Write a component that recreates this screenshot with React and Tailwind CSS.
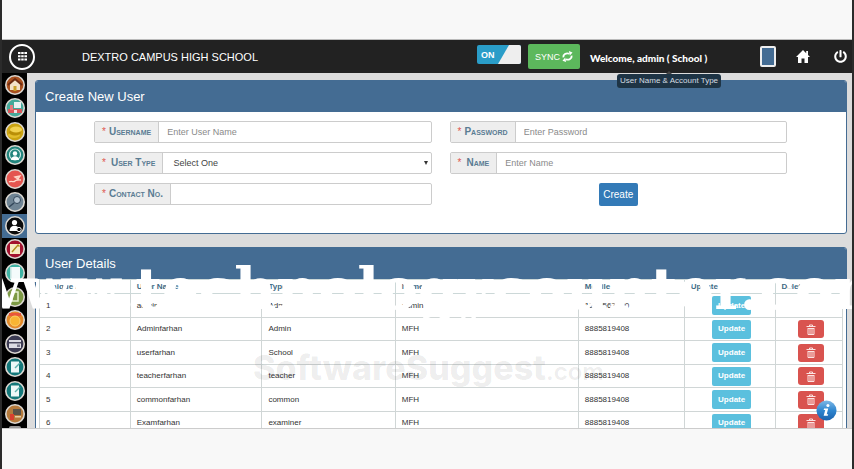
import React from 'react';
import clsx from 'clsx';
import { FaPowerOff } from 'react-icons/fa';

const menu = [
  {
    name: 'Dashboard',
    color: '#a8501f',
    art: (
      <>
        <path d="M4 11L11 5l7 6h-2v5H6v-5z" fill="#f3e3c8" />
        <path d="M4 11L11 5l7 6" stroke="#6b2a10" strokeWidth="2" fill="none" />
        <path d="M9.500 12h3v5h-3z" fill="#c9a02a" />
      </>
    ),
  },
  {
    name: 'Classes',
    color: '#45a99a',
    art: (
      <>
        <path d="M10 5h7v6h-7z" fill="#e9f1f2" />
        <path d="M4 12h14v4H4z" fill="#d9575b" />
        <path d="M6 8h3v5H6z" fill="#e57b7e" />
        <path d="M10 13h3v3h-3z" fill="#f5dfe0" />
      </>
    ),
  },
  {
    name: 'Fees',
    color: '#caa312',
    art: (
      <>
        <ellipse cx="10" cy="14" rx="6" ry="3" fill="#e3bd2b" />
        <ellipse cx="11" cy="11.500" rx="6" ry="3" fill="#b98e07" />
        <ellipse cx="12" cy="8.500" rx="6" ry="3" fill="#f2d251" />
      </>
    ),
  },
  {
    name: 'Staff',
    color: '#23857d',
    art: (
      <>
        <circle cx="11" cy="10.500" r="5.500" fill="none" stroke="#cfe9e5" strokeWidth="1.200" />
        <circle cx="11" cy="9.500" r="2.200" fill="#fff" />
        <path d="M7 16c0-5 8-5 8 0z" fill="#fff" />
      </>
    ),
  },
  {
    name: 'Events',
    color: '#e4554f',
    art: (
      <path d="M5 14c3-2 4 1 6-1s4-1 6-1M11 9l5-1-2 3z" stroke="#ffd7c9" strokeWidth="1.300" fill="#f6b8a4" />
    ),
  },
  {
    name: 'Search',
    color: '#6f8494',
    art: (
      <>
        <circle cx="13" cy="9" r="3.500" fill="#b3c3d0" stroke="#33475a" strokeWidth="1" />
        <path d="M10 12l-5 4" stroke="#33475a" strokeWidth="1.600" />
      </>
    ),
  },
  {
    name: 'Users',
    color: '#0b0b0b',
    active: true,
    art: (
      <>
        <circle cx="10.500" cy="7.500" r="2.600" fill="#fff" />
        <path d="M5.500 16c0-7 10-7 10 0z" fill="#fff" />
        <circle cx="15" cy="14.500" r="2.200" fill="#0b0b0b" stroke="#fff" strokeWidth="1" />
      </>
    ),
  },
  {
    name: 'Notes',
    color: '#a3122f',
    art: (
      <>
        <path d="M6 6h10v10H6z" fill="#f6ecc4" />
        <path d="M8 14l6-7 1.500 1.500" stroke="#b08a1c" strokeWidth="1.400" fill="none" />
      </>
    ),
  },
  {
    name: 'Register',
    color: '#3fb3a4',
    art: (
      <>
        <path d="M7 5h9v12H7z" fill="#f4fbfb" />
        <path d="M6 5h1.500v12H6z" fill="#c3e4e0" />
      </>
    ),
  },
  {
    name: 'Schedule',
    color: '#7d9a45',
    art: <path d="M8 6h6v9H8z" fill="none" stroke="#e5efcf" strokeWidth="1.500" />,
  },
  {
    name: 'Awards',
    color: '#e3892a',
    art: (
      <>
        <path d="M5 4h12v3H5z" fill="#e8563a" />
        <circle cx="11" cy="12" r="5" fill="#f8b433" stroke="#fbd06c" strokeWidth="1" />
      </>
    ),
  },
  {
    name: 'Cards',
    color: '#3b3a52',
    art: (
      <>
        <path d="M5 7h12v8H5z" fill="#dcdce4" />
        <path d="M5 9h12v1.500H5z" fill="#4b4a60" />
        <path d="M13 11.500h3v2.500h-3z" fill="#77768a" />
      </>
    ),
  },
  {
    name: 'Exams',
    color: '#14787a',
    art: (
      <>
        <path d="M7 5.500h8v11H7z" fill="#eef8f8" />
        <path d="M11 12l5-5" stroke="#5fb0ad" strokeWidth="1.500" />
      </>
    ),
  },
  {
    name: 'Results',
    color: '#14787a',
    art: (
      <>
        <path d="M7 5.500h8v11H7z" fill="#eef8f8" />
        <path d="M11 12l5-5" stroke="#5fb0ad" strokeWidth="1.500" />
      </>
    ),
  },
  {
    name: 'Library',
    color: '#b57a3c',
    art: (
      <>
        <path d="M9 6h8v6H9z" fill="#5b5348" />
        <path d="M6 11h4v6H6z" fill="#d8402f" />
        <path d="M11 13h6v1.500h-6z" fill="#e8cfa2" />
      </>
    ),
  },
];

const users = [
  { id: 1, user: 'admin', type: 'Admin', name: 'admin', mobile: '1234567890', locked: true },
  { id: 2, user: 'Adminfarhan', type: 'Admin', name: 'MFH', mobile: '8885819408' },
  { id: 3, user: 'userfarhan', type: 'School', name: 'MFH', mobile: '8885819408' },
  { id: 4, user: 'teacherfarhan', type: 'teacher', name: 'MFH', mobile: '8885819408' },
  { id: 5, user: 'commonfarhan', type: 'common', name: 'MFH', mobile: '8885819408' },
  { id: 6, user: 'Examfarhan', type: 'examiner', name: 'MFH', mobile: '8885819408' },
];

const HomeIcon = () => (
  <svg viewBox="0 0 14 13" className="w-[14px] h-[13px]" fill="#fff">
    <path d="M7 0L0 7h2v6h3.500V8.500h3V13H12V7h2l-2-2V1h-1.800v2.200z" />
  </svg>
);

const TrashIcon = () => (
  <svg viewBox="0 0 10 11" className="w-[10px] h-[11px]" fill="none" stroke="#fbe3e2">
    <path d="M0.500 2.500h9M3.500 2V1h3v1" />
    <path d="M2 4v6.500h6V4M4 4v6M6 4v6" />
    <path d="M2 4.500h6" />
  </svg>
);

const SyncIcon = () => (
  <svg viewBox="0 0 12 12" className="w-[11px] h-[11px] -mt-px" fill="none" stroke="#fff" strokeWidth="2">
    <path d="M1.500 7C1 4 4.500 1.500 8 3M10.500 5C11 8 7.500 10.500 4 9" />
    <path d="M7.500 0l4 1.500-3 3.500zM4.500 12L.5 10.500l3-3.500z" fill="#fff" stroke="none" />
  </svg>
);

const Field = ({ id, label, wide, children }) => (
  <div className="flex h-[22px] rounded-[2px] border border-[#ccc] bg-white">
    <label
      htmlFor={id}
      className="flex items-center gap-[3px] px-[7px] bg-[#eee] border-r border-[#ccc] text-[10px] leading-3 font-bold text-[#5a7c93] [font-variant:small-caps] whitespace-nowrap"
    >
      <span className={clsx('text-[#e0584f] font-normal', wide && 'mr-[2px]')}>*</span>
      {label}
    </label>
    {children}
  </div>
);

const inputClass =
  'flex-1 min-w-0 px-2 text-[9px] leading-3 text-[#555] placeholder:text-[#8a8a8a] outline-none';

const PanelHeading = ({ children }) => (
  <h2 className="h-[31px] px-[9px] flex items-center bg-[#446c93] text-white text-[13px] leading-4 shrink-0">
    {children}
  </h2>
);

const Header = () => (
  <header className="h-[33px] shrink-0 bg-[#222] text-white flex items-center pl-[7px] pr-[5px]">
    <button aria-label="Menu" className="w-[26px] h-[26px] rounded-full border-2 border-white flex items-center justify-center">
      <svg viewBox="0 0 9 9" className="w-[9px] h-[9px]" fill="#fff">
        <path d="M0 0h2.500v2H0zM3.200 0h2.500v2H3.200zM6.400 0H9v2H6.400zM0 3.300h2.500v2H0zM3.200 3.300h2.500v2H3.200zM6.400 3.300H9v2H6.400zM0 6.600h2.500v2H0zM3.200 6.600h2.500v2H3.200zM6.400 6.600H9v2H6.400z" />
      </svg>
    </button>
    <h1 className="ml-[47px] text-[11px] leading-4 flex-1 whitespace-nowrap">DEXTRO CAMPUS HIGH SCHOOL</h1>
    <button className="relative -mt-1 w-11 h-[19px] rounded-[2px] overflow-hidden bg-[#2a9dc8] text-[9px] leading-3 font-bold text-left pl-1">
      ON
      <svg viewBox="0 0 24 19" className="absolute right-0 top-0 h-full w-6">
        <path d="M12 0h12v19H1z" fill="#eee" />
      </svg>
    </button>
    <button className="ml-[7px] w-[52px] h-[25px] rounded-[2px] bg-[#5cb85c] text-[9px] leading-3 flex items-center justify-center gap-[2px]">
      SYNC
      <SyncIcon />
    </button>
    <div className="relative ml-[10px] w-[122px]">
      <span className="font-['Lato',sans-serif] font-black text-[10px] leading-4 whitespace-nowrap">
        Welcome, admin ( School )
      </span>
      <div
        role="tooltip"
        className="absolute z-20 top-[29px] left-[27px] w-[104px] h-[14px] rounded-[3px] bg-[#1e3445] text-[#d5dde3] text-[8px] leading-[14px] text-center whitespace-nowrap"
      >
        <span className="absolute -top-[3px] left-1/2 -ml-[3px] border-x-[3px] border-b-[3px] border-x-transparent border-b-[#444]" />
        User Name &amp; Account Type
      </div>
    </div>
    <button aria-label="Theme colour" className="ml-[48px] w-4 h-[21px] rounded-[2px] border-2 border-[#eee] bg-[#446c93]" />
    <a href="#home" aria-label="Home" className="ml-5">
      <HomeIcon />
    </a>
    <button aria-label="Log out" className="ml-6">
      <FaPowerOff size={13} />
    </button>
  </header>
);

const Sidebar = () => (
  <nav className="w-[25px] shrink-0 bg-black flex flex-col">
    {menu.map((item) => (
      <a
        key={item.name}
        href="#menu"
        aria-label={item.name}
        className={clsx('flex-1 min-h-0 flex items-center justify-center', item.active && 'bg-[#446c93]')}
      >
        <svg viewBox="0 0 22 22" className="w-[22px] h-[22px] shrink-0">
          <circle cx="11" cy="11" r="9.200" fill={item.color} stroke="#dcd8d2" strokeWidth="1.600" />
          {item.art}
        </svg>
      </a>
    ))}
    <span className="h-[2px] w-3 mx-auto bg-[#999] rounded-t-full" />
  </nav>
);

const CreateUser = () => (
  <section className="shrink-0 rounded-[3px] border border-[#446c93] overflow-hidden bg-white">
    <PanelHeading>Create New User</PanelHeading>
    <form className="grid grid-cols-2 gap-x-[18px] gap-y-[9px] pt-[9px] pb-[27px] pl-[58px] pr-[59px]">
      <Field id="username" label="Username">
        <input id="username" placeholder="Enter User Name" className={inputClass} />
      </Field>
      <Field id="password" label="Password">
        <input id="password" type="password" placeholder="Enter Password" className={inputClass} />
      </Field>
      <Field id="type" label="User Type" wide>
        <div className="relative flex-1 flex">
          <select id="type" className="flex-1 appearance-none px-[10px] text-[9px] leading-3 text-[#444] outline-none">
            <option>Select One</option>
          </select>
          <span className="absolute right-[3px] top-[8px] border-x-[2px] border-t-[4px] border-x-transparent border-t-[#333] pointer-events-none" />
        </div>
      </Field>
      <Field id="name" label="Name" wide>
        <input id="name" placeholder="Enter Name" className={inputClass} />
      </Field>
      <Field id="contact" label="Contact No.">
        <input id="contact" className={inputClass} />
      </Field>
      <button
        type="button"
        className="justify-self-center w-[39px] h-[23px] rounded-[2px] bg-[#337ab7] text-white text-[10px] leading-3"
      >
        Create
      </button>
    </form>
  </section>
);

const cellClass = 'border border-[#d0d6d6] px-[6px]';

const UserDetails = () => (
  <section className="shrink-0 rounded-t-[3px] overflow-hidden border border-[#446c93] bg-white">
    <PanelHeading>User Details</PanelHeading>
    <div className="px-[3px]">
      <table className="w-full table-fixed border-collapse text-left text-[8px] leading-[10px] text-[#333]">
        <colgroup>
          <col className="w-[11.3%]" />
          <col className="w-[16.4%]" />
          <col className="w-[16.6%]" />
          <col className="w-[22.8%]" />
          <col className="w-[13.2%]" />
          <col className="w-[11.3%]" />
          <col className="w-[8.4%]" />
        </colgroup>
        <thead>
          <tr className="h-[14px] text-[#3f6b85]">
            {['Unique ID', 'User Name', 'Type', 'Name', 'Mobile', 'Update', 'Delete'].map((title) => (
              <th key={title} className="border border-[#ccd8d8] px-[6px] font-bold">
                {title}
              </th>
            ))}
          </tr>
        </thead>
        <tbody>
          {users.map((u) => (
            <tr key={u.id} className="odd:h-6 even:h-[23px]">
              <td className={cellClass}>{u.id}</td>
              <td className={cellClass}>{u.user}</td>
              <td className={cellClass}>{u.type}</td>
              <td className={cellClass}>{u.name}</td>
              <td className={cellClass}>{u.mobile}</td>
              <td className="border border-[#d0d6d6] pl-1">
                <button className="mx-auto w-[39px] h-[19px] rounded-[2px] bg-[#5bc0de] text-white font-bold flex items-center justify-center">
                  Update
                </button>
              </td>
              <td className="border border-[#d0d6d6] pl-1">
                {!u.locked && (
                  <button
                    aria-label={`Delete ${u.user}`}
                    className="mx-auto w-[26px] h-[18px] rounded-[3px] bg-[#d9534f] flex items-center justify-center"
                  >
                    <TrashIcon />
                  </button>
                )}
              </td>
            </tr>
          ))}
        </tbody>
      </table>
    </div>
  </section>
);

const App = () => (
  <div className="relative h-screen overflow-hidden flex flex-col bg-[#f8f8f8] border-x-2 border-[#2b2b2b] font-['Liberation_Sans',Arial,sans-serif]">
    <div className="h-10 shrink-0 border-b border-[#bbb]" />
    <Header />
    <div className="relative flex-1 min-h-0 flex overflow-hidden bg-[#dcdcdc]">
      <Sidebar />
      <main className="flex-1 min-w-0 flex flex-col gap-[13px] pt-[7px] pl-2 pr-[5px]">
        <CreateUser />
        <UserDetails />
      </main>
      <button aria-label="Help" className="absolute z-10 right-[15px] bottom-[7px]">
        <svg viewBox="0 0 22 22" className="w-[21px] h-[21px]">
          <defs>
            <linearGradient id="help" x1="0" y1="0" x2="0" y2="1">
              <stop offset="0" stopColor="#7fb8e6" />
              <stop offset="0.500" stopColor="#2f86cf" />
              <stop offset="1" stopColor="#1c62ad" />
            </linearGradient>
          </defs>
          <circle cx="11" cy="11" r="10.500" fill="url(#help)" />
          <circle cx="12.500" cy="5.700" r="1.600" fill="#fff" />
          <path d="M8.500 9h4.300l-1.600 6h1.600l-.5 1.500H8l1.700-6H8z" fill="#fff" />
        </svg>
      </button>
    </div>
    <div className="h-[41px] shrink-0 border-t border-[#ccc]" />

    <div className="absolute left-[251px] top-[348px] flex items-baseline font-['Inter',sans-serif] text-black/8 whitespace-nowrap pointer-events-none">
      <span className="text-[34px] leading-10 font-extrabold">SoftwareSuggest</span>
      <span className="text-[24px] leading-10 font-semibold">.com</span>
    </div>
    <div className="absolute -left-[31px] top-[255px] z-10 font-['DejaVu_Serif',serif] font-bold text-[58px] leading-[68px] text-white whitespace-nowrap pointer-events-none">
      www.technologycounter.com
    </div>
  </div>
);

export default App;
